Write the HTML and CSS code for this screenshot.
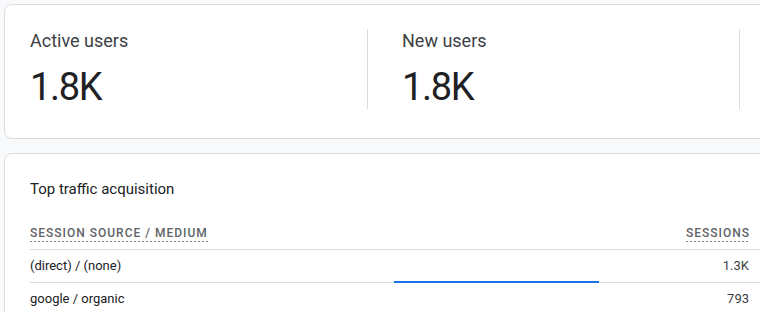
FILE: index.html
```html
<!DOCTYPE html>
<html lang="en">
<head>
<meta charset="utf-8">
<title>Analytics overview</title>
<link rel="stylesheet" href="styles.css">
</head>
<body>
<div class="page">
  <section class="card metrics">
    <div class="metric">
      <div class="metric-label">Active users</div>
      <div class="metric-value">1.8K</div>
    </div>
    <div class="metric">
      <div class="metric-label">New users</div>
      <div class="metric-value">1.8K</div>
    </div>
  </section>

  <section class="card traffic">
    <h2 class="title">Top traffic acquisition</h2>
    <div class="table">
      <div class="row head">
        <span class="cell name"><span class="dashed">SESSION SOURCE / MEDIUM</span></span>
        <span class="cell bar-cell"></span>
        <span class="cell value"><span class="dashed">SESSIONS</span></span>
      </div>
      <div class="row">
        <span class="cell name">(direct) / (none)</span>
        <span class="cell bar-cell"><span class="bar" style="width: 205px"></span></span>
        <span class="cell value">1.3K</span>
      </div>
      <div class="row">
        <span class="cell name">google / organic</span>
        <span class="cell bar-cell"></span>
        <span class="cell value">793</span>
      </div>
    </div>
  </section>
</div>
</body>
</html>
```

FILE: styles.css
```css
* { box-sizing: border-box; }

html, body {
  margin: 0;
  padding: 0;
  background: #f8f9fa;
  overflow: hidden;
  font-family: Roboto, "Liberation Sans", Arial, sans-serif;
  color: #202124;
}

.page {
  padding: 4px 0 0 4px;
  width: 900px;
}

.card {
  background: #ffffff;
  border: 1px solid #dadce0;
  border-radius: 8px;
  width: 860px;
}

.metrics {
  display: flex;
  padding: 24px 0 29px 25px;
  margin-bottom: 14px;
}

.metric {
  box-sizing: content-box;
  width: 337px;
  height: 80px;
  border-right: 1px solid #dadce0;
}

.metric + .metric {
  padding-left: 34px;
}

.metric-label {
  font-size: 18px;
  line-height: 24px;
  color: #3c4043;
}

.metric-value {
  margin-top: 12px;
  font-size: 38px;
  line-height: 44px;
  letter-spacing: -1.3px;
  color: #202124;
}

.traffic {
  padding: 25px 0 0 25px;
  height: 200px;
}

.title {
  margin: 0;
  font-size: 15px;
  line-height: 20px;
  font-weight: 400;
  color: #202124;
}

.table {
  margin-top: 26px;
}

.row {
  display: grid;
  grid-template-columns: 364px 1fr auto;
  padding-right: 114px;
  height: 33px;
  border-bottom: 1px solid #dadce0;
  font-size: 13px;
  line-height: 32px;
  color: #202124;
}

.row.head {
  height: 25px;
  align-items: end;
  padding-bottom: 7px;
  font-size: 12px;
  line-height: 16px;
  font-weight: 500;
  letter-spacing: 1px;
  color: #5f6368;
}

.cell.value {
  text-align: right;
  color: #3c4043;
}

.row.head .cell.value {
  color: #5f6368;
  margin-right: -1px;
}

.dashed {
  display: inline-block;
  padding-bottom: 1px;
  background-image: repeating-linear-gradient(to right, #80868b 0 2px, transparent 2px 4px);
  background-size: 100% 1px;
  background-position: left bottom;
  background-repeat: no-repeat;
}

.bar-cell {
  display: flex;
  align-items: flex-end;
}

.bar {
  display: block;
  height: 2px;
  margin-bottom: -1px;
  background: #1a73e8;
}
```
